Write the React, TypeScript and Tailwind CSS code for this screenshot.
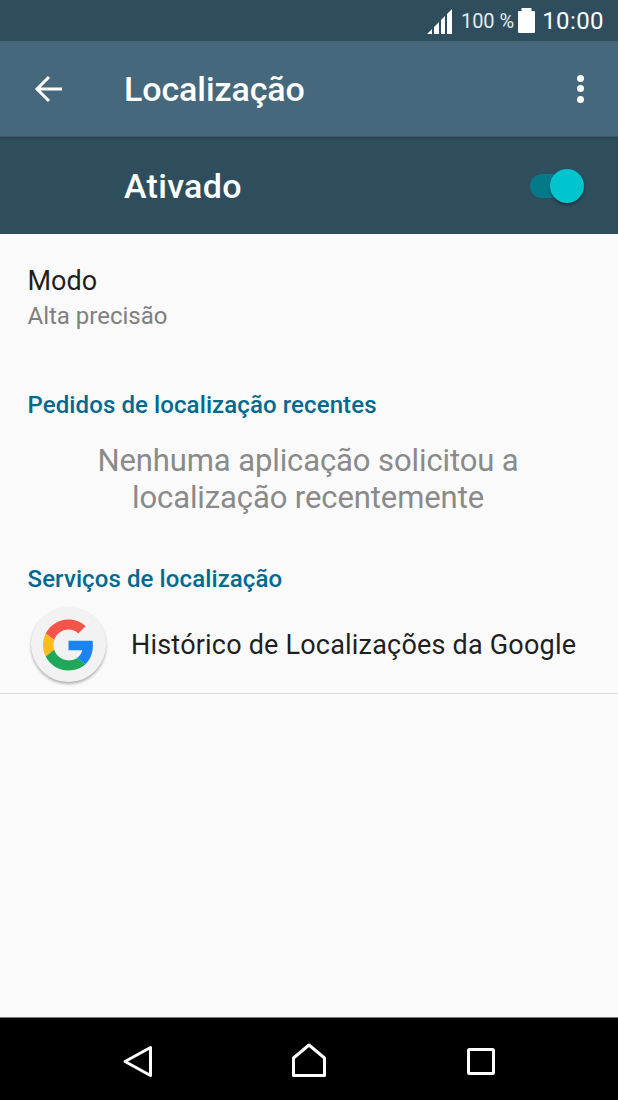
export default function App() {
  return (
    <div className="w-[618px] h-[1100px] flex flex-col bg-[#fafafa] overflow-hidden font-['Roboto',sans-serif]">
      <div className="h-[41px] bg-[#2f4e5d] flex items-center justify-end pr-[14px] text-white">
        <svg width="25" height="25" viewBox="0 0 25 25" className="mt-[2px]" fill="#fff">
          <path d="M0 25 L5 20 V25 Z M7 25 V18 L12 13 V25 Z M14 25 V11 L18 7 V25 Z M20 25 V5 L25 0 V25 Z" />
        </svg>
        <span className="ml-[9px] text-[20px] text-[#e4eaed] leading-none">100 %</span>
        <svg width="17" height="25" viewBox="0 0 17 25" className="ml-[4px] mb-[1px]" fill="#fff">
          <path d="M3.500 0 H13.500 V3 H16 A1 1 0 0 1 17 4 V24 A1 1 0 0 1 16 25 H1 A1 1 0 0 1 0 24 V4 A1 1 0 0 1 1 3 H3.500 Z" />
        </svg>
        <span className="ml-[7px] text-[24px] leading-none tracking-[0.4px]">10:00</span>
      </div>
      <div className="h-[96px] bg-[#45687c] flex items-center text-white border-b border-[#3a5868]">
        <svg width="30" height="28" viewBox="0 0 30 28" className="ml-[34px]" fill="none" stroke="#fff" strokeWidth="3">
          <path d="M28 14 H3 M15 2 L3 14 L15 26" />
        </svg>
        <span className="ml-[60px] text-[34px] font-medium leading-none flex-1 tracking-[-0.1px]">Localização</span>
        <div className="mr-[34px] flex flex-col gap-[3.5px]">
          <div className="w-[7px] h-[7px] rounded-full bg-white" />
          <div className="w-[7px] h-[7px] rounded-full bg-white" />
          <div className="w-[7px] h-[7px] rounded-full bg-white" />
        </div>
      </div>
      <div className="h-[97px] bg-[#2f4e5d] flex items-center text-white shadow-[inset_0_3px_3px_-2px_rgba(0,0,0,0.2)]">
        <span className="ml-[124px] text-[34px] font-medium leading-none flex-1 tracking-[0.3px]">Ativado</span>
        <div className="relative w-[54px] h-[34px] mr-[34px] flex items-center">
          <div className="w-[46px] h-[24px] rounded-full bg-[#047a88]" />
          <div className="absolute right-0 top-0 w-[34px] h-[34px] rounded-full bg-[#00c5cf] shadow-[0_2px_3px_rgba(0,0,0,0.35)]" />
        </div>
      </div>
      <div className="flex-1 flex flex-col">
        <div className="pl-[27.500px] pt-[32px]">
          <div className="text-[27px] leading-[30px] text-[#1f1f1f]">Modo</div>
          <div className="text-[24px] leading-[40px] text-[#808080]">Alta precisão</div>
        </div>
        <div className="pl-[27.500px] pt-[54px] text-[24px] tracking-[0.1px] leading-[30px] font-medium text-[#00698f]">Pedidos de localização recentes</div>
        <div className="pt-[22px] pr-[2px] text-center text-[31px] tracking-[-0.1px] leading-[37px] text-[#8a8a8a]">
          Nenhuma aplicação solicitou a<br />localização recentemente
        </div>
        <div className="pl-[27.500px] pt-[48px] text-[24px] tracking-[0.1px] leading-[30px] font-medium text-[#00698f]">Serviços de localização</div>
        <div className="h-[100px] pt-[4px] flex items-center border-b border-[#dcdcdc]">
          <div className="ml-[31px] w-[75px] h-[75px] rounded-full bg-[#f2f2f2] shadow-[0_2px_3px_rgba(0,0,0,0.3)] flex items-center justify-center mb-[2px]">
            <svg width="51" height="52" viewBox="0 0 48 48">
              <path fill="#F4544A" d="M24 9.500c3.540 0 6.710 1.220 9.210 3.600l6.850-6.850C35.900 2.380 30.470 0 24 0 14.620 0 6.510 5.380 2.560 13.220l7.980 6.190C12.430 13.720 17.740 9.500 24 9.500z" />
              <path fill="#1A84F0" d="M46.980 24.550c0-1.570-.15-3.090-.38-4.550H24v9.020h12.940c-.58 2.960-2.260 5.480-4.780 7.180l7.730 6c4.510-4.180 7.090-10.360 7.090-17.650z" />
              <path fill="#FCBC1C" d="M10.530 28.590c-.48-1.450-.76-2.990-.76-4.590s.27-3.140.76-4.590l-7.980-6.190C.92 16.460 0 20.120 0 24c0 3.880.92 7.540 2.560 10.780l7.970-6.190z" />
              <path fill="#1FA85A" d="M24 48c6.480 0 11.930-2.130 15.890-5.810l-7.730-6c-2.150 1.450-4.920 2.300-8.160 2.300-6.260 0-11.570-4.220-13.470-9.910l-7.980 6.190C6.510 42.620 14.620 48 24 48z" />
            </svg>
          </div>
          <span className="ml-[25px] text-[27px] tracking-[0.2px] leading-none text-[#1f1f1f] whitespace-nowrap">Histórico de Localizações da Google</span>
        </div>
      </div>
      <div className="h-[83px] bg-black border-t border-[#777] flex items-start">
        <svg width="618" height="82" viewBox="0 0 618 82" fill="none" stroke="#fff" strokeWidth="3" strokeLinejoin="round">
          <path d="M150.500 29.500 V57.500 L125 43.500 Z" />
          <path d="M293.500 40 L309 27 L324.500 40 V57.500 H293.500 Z" />
          <rect x="468.500" y="31.500" width="25" height="24" rx="1" />
        </svg>
      </div>
    </div>
  );
}
